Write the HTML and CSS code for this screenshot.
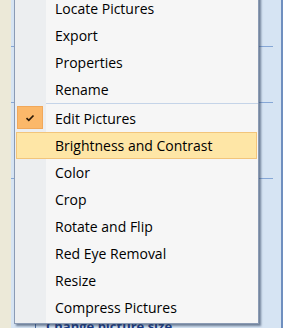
FILE: index.html
```
<!DOCTYPE html>
<html>
<head lang="en">
    <meta charset="UTF-8">
    <title>Picture menu</title>
    <link rel="stylesheet" href="styles.css">
</head>
<body>
<div id="stage">
    <div id="pane">
        <div class="block b1"></div>
        <div class="block b2"></div>
        <div class="block b3"></div>
        <div class="link">Change picture size</div>
    </div>

    <div id="menu">
        <ul>
            <li>Locate Pictures</li>
            <li>Export</li>
            <li>Properties</li>
            <li>Rename</li>
            <li class="sep"></li>
            <li class="checked"><span class="box"><svg width="10" height="8" viewBox="0 0 10 8"><path d="M1.5 4.2 L3.8 6.3 L8.5 1.5" fill="none" stroke="#2b1a08" stroke-width="1.7"/></svg></span>Edit Pictures</li>
            <li class="active">Brightness and Contrast</li>
            <li>Color</li>
            <li>Crop</li>
            <li>Rotate and Flip</li>
            <li>Red Eye Removal</li>
            <li>Resize</li>
            <li>Compress Pictures</li>
        </ul>
    </div>
</div>
</body>
</html>
```

FILE: styles.css
```
body, ul, li, div {
    margin: 0;
    padding: 0;
}

body {
    font-family: "Open Sans", "Noto Sans", sans-serif;
    background: #ece9d8;
}

li {
    list-style: none;
}

#stage {
    position: relative;
    width: 283px;
    height: 328px;
    overflow: hidden;
}

#pane {
    margin-left: 11px;
    height: 328px;
    background: #d6e4f3;
    border-right: 2px solid #6f8fbf;
    display: flex;
    flex-direction: column;
    padding-right: 8px;
}

#pane .block {
    border-bottom: 1px solid #86a7d6;
}

#pane .b1 {
    height: 46px;
}

#pane .b2 {
    height: 55px;
}

#pane .b3 {
    height: 75px;
}

#pane .link {
    margin-top: auto;
    margin-left: 24px;
    padding-left: 10px;
    border-left: 1px solid #4a6aa0;
    height: 8px;
    font-weight: bold;
    font-size: 13px;
    line-height: 13px;
    color: #1b3a86;
    white-space: nowrap;
}

#menu {
    position: absolute;
    left: 14px;
    top: -6px;
    width: 243px;
    border: 1px solid #8b9bb4;
    background: linear-gradient(to right, #eceef0 31px, #f6f6f6 31px);
    box-shadow: 2px 2px 2px rgba(40, 60, 90, 0.6);
    padding: 0 0 2px 0;
}

#menu li {
    height: 27px;
    line-height: 27px;
    padding-left: 40px;
    font-size: 14px;
    color: #000;
    position: relative;
}

#menu li.sep {
    height: 2px;
    margin-left: 31px;
    padding: 0;
    border-top: 1px solid #c5d4e8;
    box-sizing: border-box;
}

#menu li.active {
    background: #fee6a6;
    border: 1px solid #f2c57b;
    height: 25px;
    line-height: 25px;
    margin: 0 1px;
    padding-left: 38px;
}

#menu .box {
    position: absolute;
    left: 2px;
    top: 1px;
    width: 24px;
    height: 21px;
    background: #fbb86a;
    border: 1px solid #f1a85a;
    display: flex;
    align-items: center;
    justify-content: center;
}
```
